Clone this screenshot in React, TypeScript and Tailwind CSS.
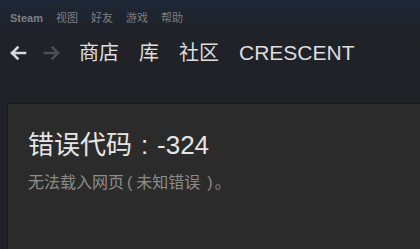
import React from "react";

export default function App() {
  return (
    <div
      className="w-[420px] h-[249px] overflow-hidden flex flex-col bg-[linear-gradient(180deg,#1e2838_0px,#1f232b_22px,#202227_45px,#202227_100%)]"
      style={{ fontFamily: '"Liberation Sans", Arial, "Noto Sans CJK SC", sans-serif' }}
    >
      <div className="flex items-center h-[36px] pl-[10px] gap-[13px] text-[11px] text-[#7b7f86] pt-[1px]">
        <span className="font-bold">Steam</span>
        <span>视图</span>
        <span>好友</span>
        <span>游戏</span>
        <span>帮助</span>
      </div>
      <div className="flex items-center h-[34px] pl-[9px]">
        <svg width="18" height="16" viewBox="0 0 18 16" className="text-[#d6d8db]">
          <path d="M16 8H3M8.5 2.5L3 8l5.5 5.5" stroke="currentColor" strokeWidth="2.6" fill="none" strokeLinecap="square" />
        </svg>
        <svg width="18" height="16" viewBox="0 0 18 16" className="ml-[16px] text-[#4a4d52]">
          <path d="M2 8h13M9.5 2.5L15 8l-5.5 5.5" stroke="currentColor" strokeWidth="2.6" fill="none" strokeLinecap="square" />
        </svg>
        <div className="flex items-center ml-[18px] gap-[20px] text-[20px] text-[#dcdedf]">
          <span>商店</span>
          <span>库</span>
          <span>社区</span>
          <span className="text-[21px]">CRESCENT</span>
        </div>
      </div>
      <div className="flex-1 mt-[33px] ml-[7px] bg-[#2b2b2b] border-l border-t border-[#1a1b1d] pl-[20px] pt-[25px]">
        <div className="text-[26px] leading-[32px] text-[#e6e6e6]">
          错误代码<span className="inline-block w-[25px] text-center">:</span>-324
        </div>
        <div className="mt-[12px] text-[16px] leading-[19px] text-[#8b8b8b]">
          无法载入网页<span className="ml-[3px] mr-[4px]">(</span>未知错误<span className="ml-[7px] mr-[2px]">)</span>。
        </div>
      </div>
    </div>
  );
}
